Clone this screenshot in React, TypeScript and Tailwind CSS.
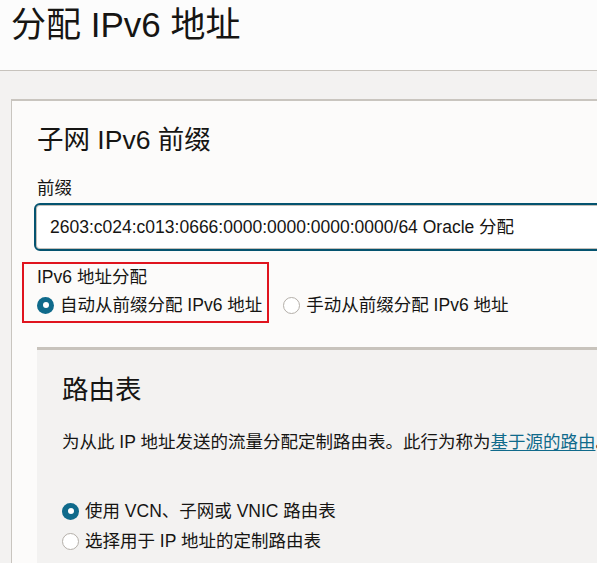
import React from 'react';

const fontStack = "font-['Liberation_Sans','Noto_Sans_CJK_SC',sans-serif]";

function Radio({ checked, label }: { checked?: boolean; label: string }) {
  return (
    <label className="flex items-center gap-[6px] whitespace-nowrap">
      {checked ? (
        <span className="flex h-[17px] w-[17px] shrink-0 items-center justify-center rounded-full bg-[#0f6a8b]">
          <span className="h-[6px] w-[6px] rounded-full bg-white" />
        </span>
      ) : (
        <span className="h-[17px] w-[17px] shrink-0 rounded-full border border-[#b4afa9] bg-white" />
      )}
      <span>{label}</span>
    </label>
  );
}

export default function App() {
  return (
    <div className={`h-[563px] w-[597px] overflow-hidden bg-[#f3f2f1] text-[#161513] ${fontStack}`}>
      {/* Page header */}
      <header className="h-[71px] border-b border-[#c7c3bd] bg-[#fcfcfc] pl-[11px]">
        <h1 className="text-[35px] leading-[50px] whitespace-nowrap">分配 IPv6 地址</h1>
      </header>

      <div className="pl-[11px] pt-[28px]">
        {/* Card */}
        <section className="w-[780px] border-l border-t-2 border-[#c9c5bf] bg-[#fcfbfa] pl-[25px] pt-[21px]">
          <h2 className="text-[26.5px] leading-[36px] whitespace-nowrap">子网 IPv6 前缀</h2>

          <div className="mt-[18px] text-[17.5px] leading-[24px]">前缀</div>
          <div className="-ml-[3px] mt-[3px] flex h-[48px] items-center rounded-[6px] border-2 border-[#04536f] bg-white pl-[14px] text-[17.5px] whitespace-nowrap shadow-[inset_0_0_0_1px_#c4bfb9]">
            2603:c024:c013:0666:0000:0000:0000:0000/64 Oracle 分配
          </div>

          {/* IPv6 address assignment */}
          <div className="relative mt-[14px] text-[17.5px]">
            <div className="leading-[24px]">IPv6 地址分配</div>
            <div className="mt-[4px] flex items-center gap-[21px] leading-[24px]">
              <Radio checked label="自动从前缀分配 IPv6 地址" />
              <Radio label="手动从前缀分配 IPv6 地址" />
            </div>
            <div className="pointer-events-none absolute left-[-15px] top-[-3px] h-[61px] w-[247px] border-2 border-[#e0141e]" />
          </div>

          {/* Route table sub-panel */}
          <div className="mt-[30px] h-[220px] border-t-[3px] border-[#c8c3bc] bg-[#f3f2f1] pl-[25px] pt-[22px]">
            <h3 className="text-[26.5px] leading-[36px]">路由表</h3>
            <p className="mt-[21px] text-[17.5px] leading-[26px] whitespace-nowrap">
              为从此 IP 地址发送的流量分配定制路由表。此行为称为
              <a className="text-[#0f6a8b] underline underline-offset-2">基于源的路由</a>。
            </p>
            <div className="mt-[41px] text-[17.5px]">
              <div className="flex h-[30px] items-center">
                <Radio checked label="使用 VCN、子网或 VNIC 路由表" />
              </div>
              <div className="flex h-[30px] items-center">
                <Radio label="选择用于 IP 地址的定制路由表" />
              </div>
            </div>
          </div>
        </section>
      </div>
    </div>
  );
}
